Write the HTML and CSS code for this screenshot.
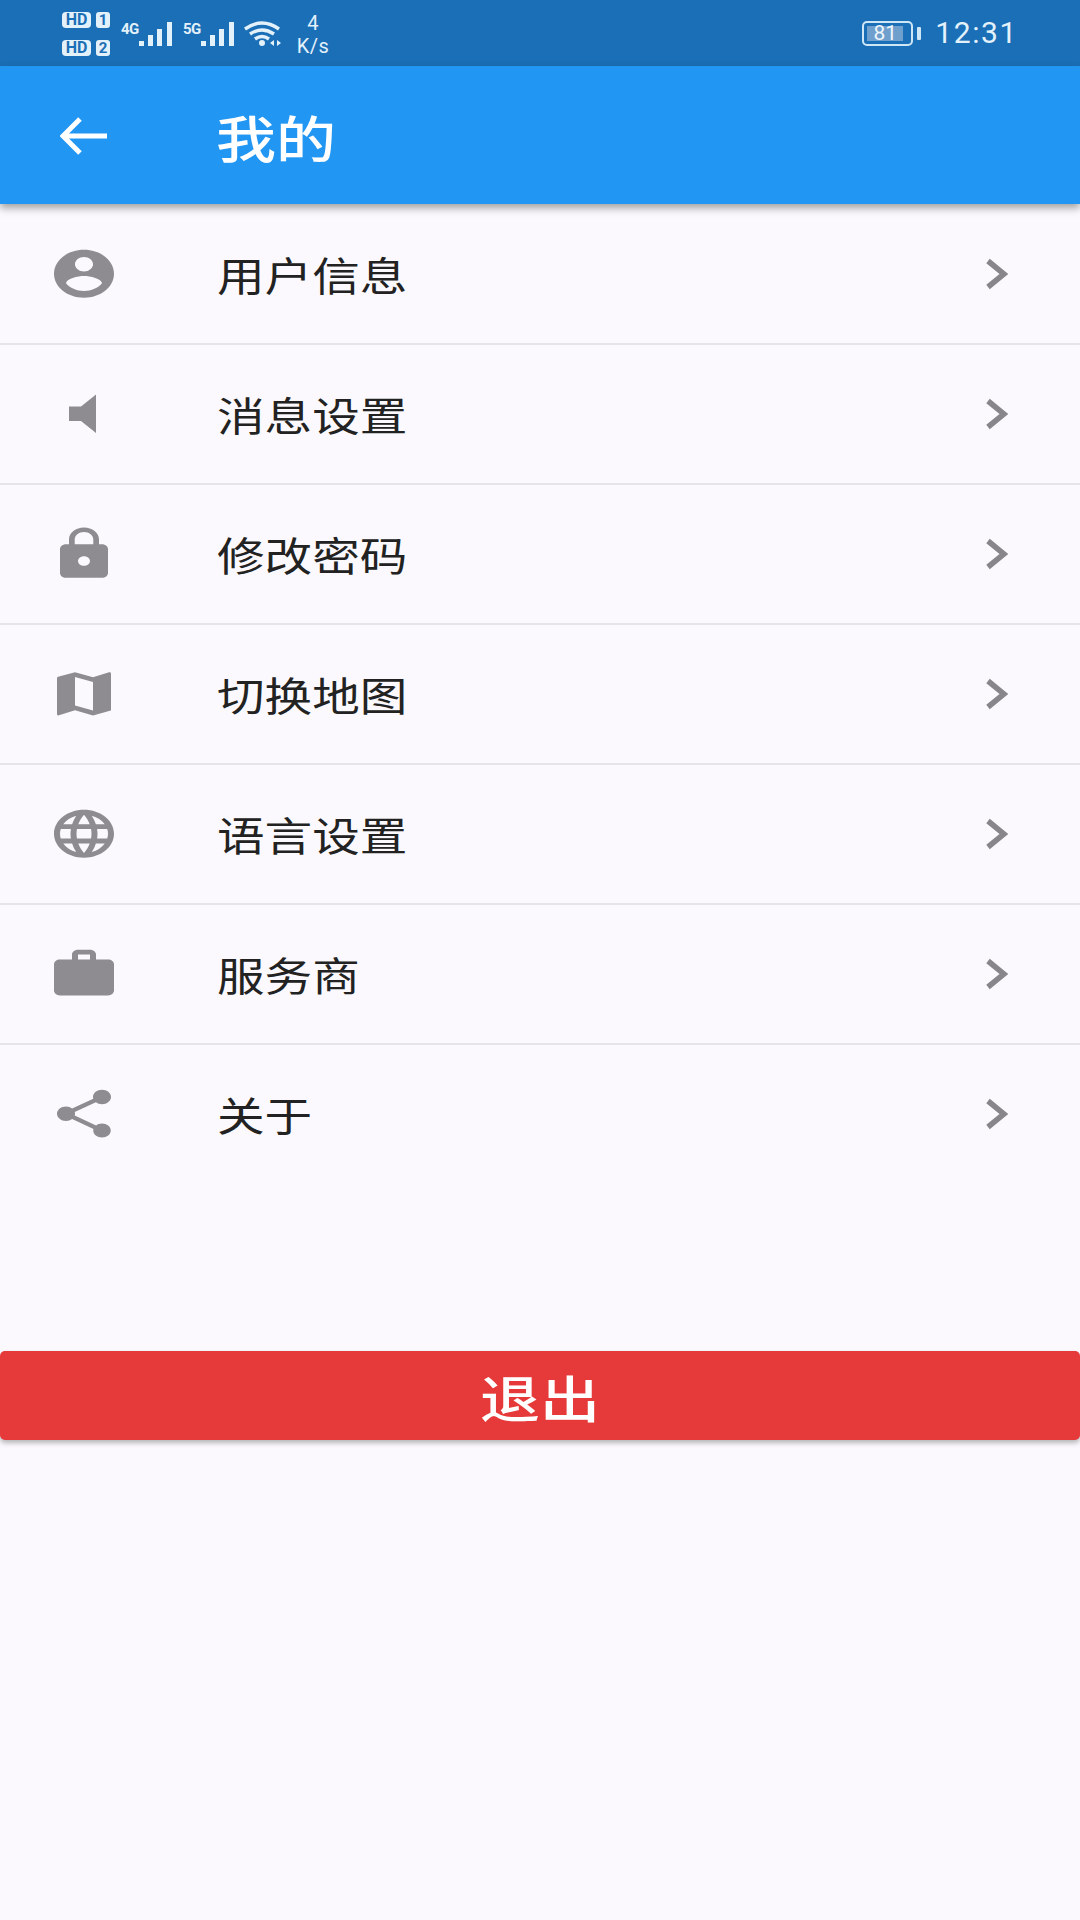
FILE: index.html
```html
<!DOCTYPE html>
<html lang="zh-CN">
<head>
	<meta charset="UTF-8">
	<link rel="stylesheet" href="styles.css">
	<title>我的</title>
</head>
<body>
<div class="status">
	<div class="sims">
		<div class="sim"><span class="hd">HD</span><span class="num">1</span></div>
		<div class="sim"><span class="hd">HD</span><span class="num">2</span></div>
	</div>
	<div class="net">
		<span class="gen">4G</span>
		<svg class="bars" viewBox="0 0 33 25"><path d="M0 20h5v5H0zM9 14h5v11H9zM18 8h5v17h-5zM28 1h5v24h-5z"/></svg>
	</div>
	<div class="net">
		<span class="gen">5G</span>
		<svg class="bars" viewBox="0 0 33 25"><path d="M0 20h5v5H0zM9 14h5v11H9zM18 8h5v17h-5zM28 1h5v24h-5z"/></svg>
	</div>
	<svg class="wifi" viewBox="0 0 38 25">
		<path class="arc" d="M1 8Q18 -4 35 8M6 13Q18 5 30 13M11 18Q18 13 25 18"/>
		<circle cx="18" cy="22" r="3"/>
		<path d="M26 22l4-3v6zM33 19l4 3-4 3z"/>
	</svg>
	<div class="speed"><span>4</span><span>K/s</span></div>
	<div class="right">
		<div class="battery">
			<div class="shell"><span class="level">81</span></div>
			<span class="nub"></span>
		</div>
		<span class="time">12:31</span>
	</div>
</div>
<div class="appbar">
	<svg class="back" viewBox="0 0 48 38"><path d="M47 19H3M20 2L3 19l17 17"/></svg>
	<span class="title">我的</span>
</div>
<ul class="list">
	<li class="row">
		<svg class="icon" viewBox="0 0 24 24" preserveAspectRatio="none"><path d="M12 2C6.48 2 2 6.48 2 12s4.48 10 10 10 10-4.48 10-10S17.52 2 12 2zm0 3c1.66 0 3 1.34 3 3s-1.34 3-3 3-3-1.34-3-3 1.34-3 3-3zm0 14.2c-2.5 0-4.71-1.28-6-3.22.03-1.99 4-3.08 6-3.08 1.99 0 5.97 1.09 6 3.08-1.29 1.94-3.5 3.22-6 3.22z"/></svg>
		<span class="label">用户信息</span>
		<svg class="more" viewBox="0 0 24 32"><path d="M4 3l16 13L4 29"/></svg>
	</li>
	<li class="row">
		<svg class="icon" viewBox="0 0 24 24" preserveAspectRatio="none"><path d="M7 9v6h4l5 5V4l-5 5H7z"/></svg>
		<span class="label">消息设置</span>
		<svg class="more" viewBox="0 0 24 32"><path d="M4 3l16 13L4 29"/></svg>
	</li>
	<li class="row">
		<svg class="icon" viewBox="0 0 24 24" preserveAspectRatio="none"><path d="M18 8h-1V6c0-2.76-2.24-5-5-5S7 3.24 7 6v2H6c-1.1 0-2 .9-2 2v10c0 1.1.9 2 2 2h12c1.1 0 2-.9 2-2V10c0-1.1-.9-2-2-2zm-6 9c-1.1 0-2-.9-2-2s.9-2 2-2 2 .9 2 2-.9 2-2 2zm3.1-9H8.9V6c0-1.71 1.39-3.1 3.1-3.1 1.71 0 3.1 1.39 3.1 3.1v2z"/></svg>
		<span class="label">修改密码</span>
		<svg class="more" viewBox="0 0 24 32"><path d="M4 3l16 13L4 29"/></svg>
	</li>
	<li class="row">
		<svg class="icon" viewBox="0 0 24 24" preserveAspectRatio="none"><path d="M20.5 3l-.16.03L15 5.1 9 3 3.36 4.9c-.21.07-.36.25-.36.48V20.5c0 .28.22.5.5.5l.16-.03L9 18.9l6 2.1 5.64-1.9c.21-.07.36-.25.36-.48V3.5c0-.28-.22-.5-.5-.5zM15 19l-6-2.11V5l6 2.11V19z"/></svg>
		<span class="label">切换地图</span>
		<svg class="more" viewBox="0 0 24 32"><path d="M4 3l16 13L4 29"/></svg>
	</li>
	<li class="row">
		<svg class="icon" viewBox="0 0 24 24" preserveAspectRatio="none"><path d="M11.99 2C6.47 2 2 6.48 2 12s4.47 10 9.99 10C17.52 22 22 17.52 22 12S17.52 2 11.99 2zm6.93 6h-2.95c-.32-1.25-.78-2.45-1.38-3.56 1.84.63 3.37 1.91 4.33 3.56zM12 4.04c.83 1.2 1.48 2.53 1.91 3.96h-3.82c.43-1.43 1.08-2.76 1.91-3.96zM4.26 14C4.1 13.36 4 12.69 4 12s.1-1.36.26-2h3.38c-.08.66-.14 1.32-.14 2 0 .68.06 1.34.14 2H4.26zm.82 2h2.95c.32 1.25.78 2.45 1.38 3.56-1.84-.63-3.37-1.9-4.33-3.56zm2.95-8H5.08c.96-1.66 2.49-2.93 4.33-3.56C8.81 5.55 8.35 6.75 8.03 8zM12 19.96c-.83-1.2-1.48-2.53-1.91-3.96h3.82c-.43 1.43-1.08 2.76-1.91 3.96zM14.34 14H9.66c-.09-.66-.16-1.32-.16-2 0-.68.07-1.35.16-2h4.68c.09.65.16 1.32.16 2 0 .68-.07 1.34-.16 2zm.25 5.56c.6-1.11 1.06-2.31 1.38-3.56h2.95c-.96 1.65-2.49 2.93-4.33 3.56zM16.36 14c.08-.66.14-1.32.14-2 0-.68-.06-1.34-.14-2h3.38c.16.64.26 1.31.26 2s-.1 1.36-.26 2h-3.38z"/></svg>
		<span class="label">语言设置</span>
		<svg class="more" viewBox="0 0 24 32"><path d="M4 3l16 13L4 29"/></svg>
	</li>
	<li class="row">
		<svg class="icon" viewBox="0 0 24 24" preserveAspectRatio="none"><path d="M20 6h-4V4c0-1.11-.89-2-2-2h-4c-1.11 0-2 .89-2 2v2H4c-1.11 0-1.99.89-1.99 2L2 19c0 1.11.89 2 2 2h16c1.11 0 2-.89 2-2V8c0-1.11-.89-2-2-2zm-6 0h-4V4h4v2z"/></svg>
		<span class="label">服务商</span>
		<svg class="more" viewBox="0 0 24 32"><path d="M4 3l16 13L4 29"/></svg>
	</li>
	<li class="row">
		<svg class="icon" viewBox="0 0 24 24" preserveAspectRatio="none"><path d="M18 16.08c-.76 0-1.44.3-1.96.77L8.91 12.7c.05-.23.09-.46.09-.7s-.04-.47-.09-.7l7.05-4.11c.54.5 1.25.81 2.04.81 1.66 0 3-1.34 3-3s-1.34-3-3-3-3 1.34-3 3c0 .24.04.47.09.7L8.04 9.81C7.5 9.31 6.79 9 6 9c-1.66 0-3 1.34-3 3s1.34 3 3 3c.79 0 1.5-.31 2.04-.81l7.12 4.16c-.05.21-.08.43-.08.65 0 1.61 1.31 2.92 2.92 2.92 1.61 0 2.92-1.31 2.92-2.92s-1.31-2.92-2.92-2.92z"/></svg>
		<span class="label">关于</span>
		<svg class="more" viewBox="0 0 24 32"><path d="M4 3l16 13L4 29"/></svg>
	</li>
</ul>
<div class="logout"><span class="logout-text">退出</span></div>
</body>
</html>
```

FILE: styles.css
```css
body,ul,li{
	margin: 0;
	padding: 0;
}
li{
	list-style: none;
}
body{
	height: 1920px;
	overflow: hidden;
	background: #fbf9fd;
	font-family: "Noto Sans CJK SC", "Roboto", sans-serif;
	color: #222;
}
.status{
	display: flex;
	align-items: center;
	height: 66px;
	padding: 0 62px 0 62px;
	box-sizing: border-box;
	background: #1b6fb6;
	color: #e3f1fb;
	font-family: "Roboto", sans-serif;
}
.sims{
	display: flex;
	flex-direction: column;
	gap: 12px;
	margin-top: 1px;
}
.sim{
	display: flex;
	gap: 5px;
}
.hd{
	width: 29px;
	height: 16px;
	border-radius: 4px;
	background: #e3f1fb;
	color: #1b6fb6;
	font-size: 16px;
	font-weight: 700;
	line-height: 16px;
	text-align: center;
}
.num{
	width: 14px;
	height: 16px;
	border-radius: 3px;
	background: #e3f1fb;
	color: #1b6fb6;
	font-size: 15px;
	font-weight: 700;
	line-height: 16px;
	text-align: center;
}
.net{
	display: flex;
	align-items: flex-end;
	margin-left: 11px;
	height: 25px;
}
.net + .net{
	margin-left: 11px;
}
.gen{
	align-self: flex-start;
	width: 18px;
	font-size: 15px;
	font-weight: 700;
	line-height: 16px;
	letter-spacing: -.5px;
}
.bars{
	width: 33px;
	height: 25px;
	fill: #e3f1fb;
}
.wifi{
	width: 38px;
	height: 25px;
	margin-left: 10px;
	fill: #e3f1fb;
}
.wifi .arc{
	fill: none;
	stroke: #e3f1fb;
	stroke-width: 3.4;
}
.speed{
	display: flex;
	flex-direction: column;
	align-items: center;
	width: 36px;
	margin-top: 4px;
	margin-left: 13px;
	font-size: 20px;
	line-height: 23px;
	letter-spacing: .5px;
}
.right{
	display: flex;
	align-items: center;
	margin-left: auto;
}
.battery{
	display: flex;
	align-items: center;
	gap: 4px;
}
.shell{
	width: 51px;
	height: 25px;
	padding: 3px;
	box-sizing: border-box;
	border: 2px solid #cfe6f7;
	border-radius: 5px;
}
.level{
	display: block;
	width: 36px;
	height: 15px;
	background: #6f9fcc;
	color: #eef6fc;
	font-size: 21px;
	line-height: 15px;
	text-align: center;
}
.nub{
	width: 4px;
	height: 13px;
	border-radius: 1px;
	background: #cfe6f7;
}
.time{
	margin-left: 14px;
	font-size: 30px;
	letter-spacing: 1.6px;
	line-height: 34px;
}
.appbar{
	position: relative;
	display: flex;
	align-items: center;
	height: 138px;
	padding: 2px 0 0 60px;
	box-sizing: border-box;
	background: #2196f3;
	box-shadow: 0 4px 8px rgba(0,0,0,.36);
	color: #fff;
}
.back{
	width: 48px;
	height: 38px;
	fill: none;
	stroke: #fff;
	stroke-width: 5;
}
.title{
	display: inline-block;
	margin-left: 108px;
	font-size: 60px;
	font-weight: 500;
	line-height: 80px;
	transform: scaleY(.84);
}
.list{
	padding-top: 1px;
}
.row{
	display: flex;
	align-items: center;
	height: 138px;
	padding-left: 48px;
	border-bottom: 2px solid #e6e4e8;
}
.row:last-child{
	border-bottom: 0;
}
.icon{
	width: 72px;
	height: 57.6px;
	fill: #8e8c90;
}
.label{
	display: inline-block;
	margin-left: 97px;
	font-size: 47.6px;
	line-height: 60px;
	transform: scaleY(.84);
}
.more{
	width: 24px;
	height: 32px;
	margin-left: auto;
	margin-right: 72px;
	fill: none;
	stroke: #88868a;
	stroke-width: 5.5;
}
.logout{
	display: flex;
	justify-content: center;
	align-items: center;
	height: 89px;
	margin-top: 168px;
	border-radius: 5px;
	background: #e53a39;
	box-shadow: 0 3px 5px rgba(0,0,0,.28);
	color: #fff;
}
.logout-text{
	display: inline-block;
	font-size: 60px;
	font-weight: 500;
	line-height: 80px;
	transform: scaleY(.84);
}
```
